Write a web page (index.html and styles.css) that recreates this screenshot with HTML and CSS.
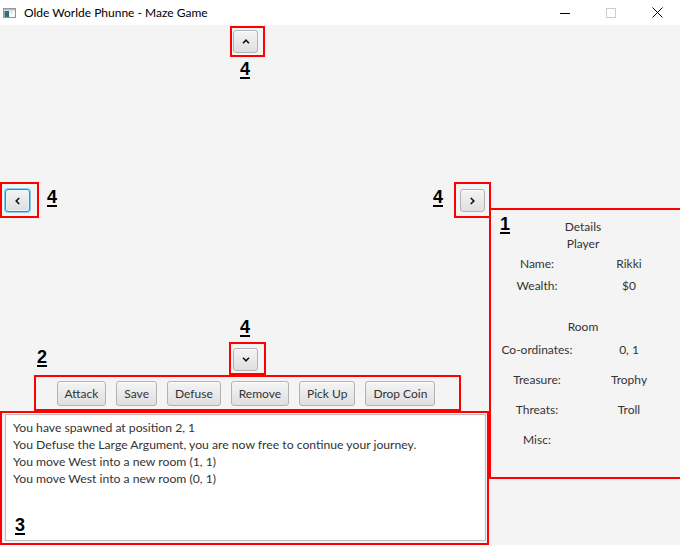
FILE: index.html
```html
<!DOCTYPE html>
<html lang="en">
<head>
<meta charset="utf-8">
<title>Olde Worlde Phunne - Maze Game</title>
<link rel="stylesheet" href="styles.css">
</head>
<body>
<div class="window">
  <header class="titlebar">
    <svg class="app-icon" width="13" height="10" viewBox="0 0 13 10" aria-hidden="true">
      <rect x="0.5" y="0.5" width="12" height="9" fill="#e9eef0" stroke="#8d989c"/>
      <rect x="1" y="1" width="11" height="1.5" fill="#b9c4c8"/>
      <rect x="1.5" y="3" width="4.5" height="6" fill="#2f6f7c"/>
      <rect x="7" y="3" width="4.5" height="6" fill="#ffffff"/>
      <rect x="7.5" y="3.5" width="2" height="2" fill="#c9d4d8"/>
    </svg>
    <span class="title">Olde Worlde Phunne - Maze Game</span>
    <div class="controls">
      <span class="ctl">
        <svg width="10" height="10" viewBox="0 0 10 10"><path d="M0 5.5 H10" stroke="#000" stroke-width="1"/></svg>
      </span>
      <span class="ctl">
        <svg width="10" height="10" viewBox="0 0 10 10"><rect x="0.5" y="0.5" width="9" height="9" fill="none" stroke="#cccccc" stroke-width="1"/></svg>
      </span>
      <span class="ctl">
        <svg width="11" height="11" viewBox="0 0 11 11"><path d="M0.5 0.5 L10.5 10.5 M10.5 0.5 L0.5 10.5" stroke="#000" stroke-width="1"/></svg>
      </span>
    </div>
  </header>

  <main class="client">
    <section class="stage">
      <div class="up-row">
        <div class="mark mark-up">
          <button class="btn nav" type="button">
            <svg width="8" height="5" viewBox="0 0 8 5"><path d="M1 4.2 L4 1.2 L7 4.2" fill="none" stroke="#111" stroke-width="1.6"/></svg>
          </button>
        </div>
        <span class="num num-up">4</span>
      </div>

      <div class="mid-row">
        <div class="nav-group">
          <div class="mark mark-left">
            <button class="btn nav focused" type="button">
              <svg width="5" height="8" viewBox="0 0 5 8"><path d="M4.2 1 L1.2 4 L4.2 7" fill="none" stroke="#111" stroke-width="1.6"/></svg>
            </button>
          </div>
          <span class="num num-left">4</span>
        </div>
        <div class="nav-group nav-group-right">
          <span class="num num-right">4</span>
          <div class="mark mark-right">
            <button class="btn nav" type="button">
              <svg width="5" height="8" viewBox="0 0 5 8"><path d="M0.8 1 L3.8 4 L0.8 7" fill="none" stroke="#111" stroke-width="1.6"/></svg>
            </button>
          </div>
        </div>
      </div>

      <div class="bottom">
        <div class="down-label"><span class="num">4</span></div>
        <div class="down-row">
          <span class="num num-two">2</span>
          <div class="mark mark-down">
            <button class="btn nav" type="button">
              <svg width="8" height="5" viewBox="0 0 8 5"><path d="M1 0.8 L4 3.8 L7 0.8" fill="none" stroke="#111" stroke-width="1.6"/></svg>
            </button>
          </div>
        </div>
        <div class="mark actions">
          <button class="btn" type="button">Attack</button>
          <button class="btn" type="button">Save</button>
          <button class="btn" type="button">Defuse</button>
          <button class="btn" type="button">Remove</button>
          <button class="btn" type="button">Pick Up</button>
          <button class="btn" type="button">Drop Coin</button>
        </div>
        <div class="mark log-box">
          <div class="log">
            <div>You have spawned at position 2, 1</div>
            <div>You Defuse the Large Argument, you are now free to continue your journey.</div>
            <div>You move West into a new room (1, 1)</div>
            <div>You move West into a new room (0, 1)</div>
          </div>
          <span class="num num-three">3</span>
        </div>
      </div>
    </section>

    <aside class="side">
      <div class="mark details">
        <span class="num num-one">1</span>
        <div class="heading">Details</div>
        <div class="heading sp-1">Player</div>
        <div class="pair sp-4"><span>Name:</span><span>Rikki</span></div>
        <div class="pair sp-6"><span>Wealth:</span><span>$0</span></div>
        <div class="heading sp-25">Room</div>
        <div class="pair sp-7"><span>Co-ordinates:</span><span>0, 1</span></div>
        <div class="pair sp-14"><span>Treasure:</span><span>Trophy</span></div>
        <div class="pair sp-14"><span>Threats:</span><span>Troll</span></div>
        <div class="pair sp-14"><span>Misc:</span><span></span></div>
      </div>
    </aside>
  </main>
</div>
</body>
</html>
```

FILE: styles.css
```css
* {
  box-sizing: content-box;
}

body {
  margin: 0;
  width: 680px;
  height: 545px;
  overflow: hidden;
  background: #f4f4f4;
  color: #333333;
  font-family: Lato, "Open Sans", sans-serif;
  font-size: 12px;
}

.window {
  width: 680px;
  height: 545px;
  overflow: hidden;
}

/* ---------- title bar ---------- */
.titlebar {
  height: 25px;
  background: #ffffff;
  display: flex;
  align-items: center;
}

.app-icon {
  margin-left: 3px;
  margin-right: 8px;
  flex: none;
}

.title {
  color: #000000;
  font-size: 12px;
  line-height: 25px;
}

.controls {
  margin-left: auto;
  display: flex;
}

.ctl {
  width: 46px;
  height: 25px;
  display: flex;
  align-items: center;
  justify-content: center;
}

/* ---------- client area ---------- */
.client {
  display: grid;
  grid-template-columns: 489px 191px;
  height: 520px;
}

.stage {
  display: flex;
  flex-direction: column;
  height: 520px;
}

.mark {
  border: 2px solid #ff0000;
}

.num {
  font-family: "Liberation Sans", Arial, sans-serif;
  font-weight: 700;
  font-size: 18px;
  line-height: 20px;
  color: #000000;
  text-decoration: underline;
  text-decoration-thickness: 2px;
  text-underline-offset: 2px;
}

/* buttons */
.btn {
  font: inherit;
  color: #333333;
  height: 25px;
  box-sizing: border-box;
  margin: 0;
  padding: 0 7px;
  border: 1px solid #b3b3b3;
  border-radius: 3px;
  background: linear-gradient(#f4f4f4, #dfdfdf);
  box-shadow: inset 0 1px 0 rgba(255, 255, 255, 0.85);
  display: flex;
  align-items: center;
  justify-content: center;
}

.nav {
  width: 25px;
  height: 23px;
  padding: 0;
}

.nav.focused {
  border-color: #039ed3;
  box-shadow: 0 0 0 1px #86d0ef, inset 0 0 0 1px #eaf6fc;
}

/* top */
.up-row {
  display: flex;
  flex-direction: column;
  align-items: flex-start;
  padding-left: 230px;
  margin-top: 1px;
}

.mark-up {
  padding: 2px 5px 2px 1px;
}

.num-up {
  margin-top: 2px;
  margin-left: 10px;
}

/* middle */
.mid-row {
  margin-top: 103px;
  display: flex;
  justify-content: space-between;
  align-items: flex-start;
}

.nav-group {
  display: flex;
  align-items: flex-start;
}

.nav-group-right {
  margin-right: -2px;
}

.mark-left {
  padding: 5px 7px 4px 3px;
}

.num-left {
  margin-left: 8px;
  margin-top: 5px;
}

.num-right {
  margin-right: 11px;
  margin-top: 5px;
}

.mark-right {
  padding: 5px 4px 4px 4px;
}

/* bottom */
.bottom {
  margin-top: auto;
  display: flex;
  flex-direction: column;
}

.down-label {
  padding-left: 240px;
  height: 20px;
}

.down-row {
  margin-top: 5px;
  display: flex;
  align-items: flex-start;
  padding-left: 37px;
}

.num-two {
  margin-top: 5px;
}

.mark-down {
  margin-left: 182px;
  padding: 4px 6px 2px 2px;
}

.actions {
  margin-left: 34px;
  width: 420px;
  height: 25px;
  padding: 4px 3px 3px 0;
  display: flex;
  justify-content: center;
  gap: 10px;
}

.log-box {
  position: relative;
  width: 481px;
  height: 127px;
  padding: 1px 1px 2px 3px;
}

.log {
  box-sizing: border-box;
  height: 127px;
  background: #ffffff;
  border: 1px solid #bdbdbd;
  box-shadow: inset 0 1px 2px rgba(0, 0, 0, 0.06);
  padding: 4px 7px 0;
  line-height: 17px;
  font-size: 12.2px;
  color: #333333;
}

.num-three {
  position: absolute;
  left: 13px;
  top: 102px;
}

/* ---------- side panel ---------- */
.side {
  overflow: visible;
}

.details {
  position: relative;
  margin-top: 183px;
  box-sizing: border-box;
  width: 198px;
  height: 271px;
  padding: 9px 10px 0 0;
}

.num-one {
  position: absolute;
  left: 9px;
  top: 4px;
}

.heading {
  width: 184px;
  text-align: center;
  line-height: 16px;
}

.pair {
  display: grid;
  grid-template-columns: 92px 92px;
  text-align: center;
  line-height: 16px;
  white-space: nowrap;
}

.sp-1 { margin-top: 1px; }
.sp-4 { margin-top: 4px; }
.sp-6 { margin-top: 6px; }
.sp-7 { margin-top: 7px; }
.sp-14 { margin-top: 14px; }
.sp-25 { margin-top: 25px; }
```
